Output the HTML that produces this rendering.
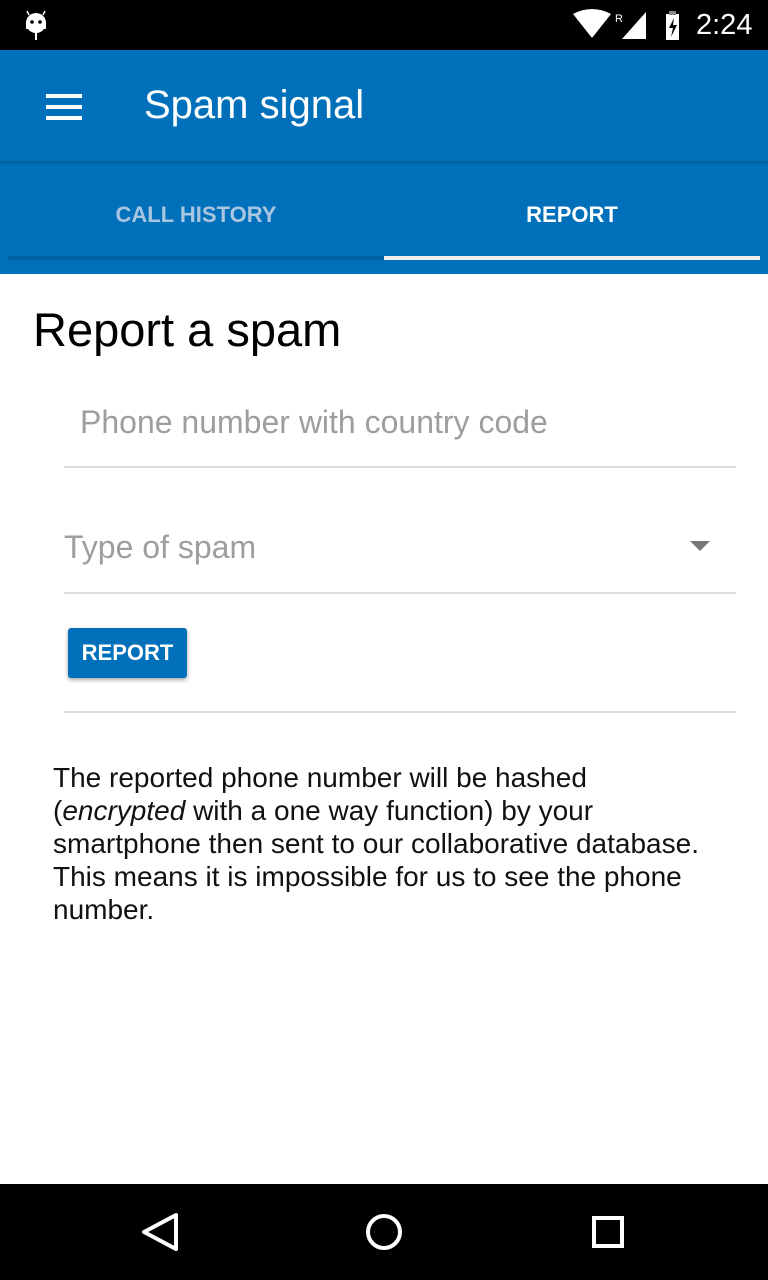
<!DOCTYPE html>
<html><head><style>
body{margin:0;width:768px;height:1280px;position:relative;background:#fff;font-family:"Liberation Sans",sans-serif;overflow:hidden}
.abs{position:absolute}
</style></head><body>
<div class="abs" style="left:0;top:0;width:768px;height:50px;background:#000"></div>
<svg class="abs" style="left:16px;top:8px" width="40" height="34" viewBox="0 0 40 34">
<ellipse cx="20" cy="15" rx="10" ry="10" fill="#fff"/><rect x="10" y="15" width="20" height="6" fill="#fff"/>
<circle cx="16" cy="14" r="1.8" fill="#000"/><circle cx="24" cy="14" r="1.8" fill="#000"/>
<rect x="19" y="22" width="2" height="10" fill="#fff"/>
<line x1="13" y1="7" x2="11" y2="3" stroke="#fff" stroke-width="1.5"/><line x1="27" y1="7" x2="29" y2="3" stroke="#fff" stroke-width="1.5"/></svg>
<svg class="abs" style="left:570px;top:8px" width="120" height="34" viewBox="0 0 120 34">
<path d="M3 6 Q22 -4 41 6 L22 30 Z" fill="#fff"/>
<text x="45" y="14" fill="#fff" font-size="11" font-family="Liberation Sans">R</text>
<path d="M52 31 L76 31 L76 4 Z" fill="#fff"/>
<rect x="96" y="6" width="13" height="26" fill="#fff"/><rect x="99" y="3" width="7" height="4" fill="#888"/>
<path d="M104 10 L99 20 L103 20 L101 29 L107 17 L103 17 Z" fill="#000"/></svg>
<div class="abs" style="left:696px;top:9px;color:#fff;font-size:29px">2:24</div>
<div class="abs" style="left:0;top:50px;width:768px;height:224px;background:#0070ba"></div>
<div class="abs" style="left:0;top:161px;width:768px;height:4px;background:linear-gradient(#005c9a,#0070ba)"></div>
<div class="abs" style="left:46px;top:94px;width:36px;height:4px;background:#fff;box-shadow:0 11px 0 #fff,0 22px 0 #fff"></div>
<div class="abs" style="left:144px;top:83px;color:#fff;font-size:40px">Spam signal</div>
<div class="abs" style="left:0;top:202px;width:392px;text-align:center;color:#a9c6e0;font-size:22px;font-weight:bold">CALL HISTORY</div>
<div class="abs" style="left:384px;top:202px;width:376px;text-align:center;color:#fff;font-size:22px;font-weight:bold">REPORT</div>
<div class="abs" style="left:8px;top:256px;width:376px;height:4px;background:#0062a6"></div>
<div class="abs" style="left:384px;top:256px;width:376px;height:4px;background:#eee"></div>
<div class="abs" style="left:33px;top:302px;font-size:47px;color:#000">Report a spam</div>
<div class="abs" style="left:80px;top:404px;font-size:32px;color:#9e9e9e">Phone number with country code</div>
<div class="abs" style="left:64px;top:466px;width:672px;height:2px;background:#ddd"></div>
<div class="abs" style="left:64px;top:529px;font-size:32px;color:#9e9e9e">Type of spam</div>
<div class="abs" style="left:690px;top:541px;width:0;height:0;border-left:10px solid transparent;border-right:10px solid transparent;border-top:10px solid #777"></div>
<div class="abs" style="left:64px;top:592px;width:672px;height:2px;background:#ddd"></div>
<div class="abs" style="left:68px;top:628px;width:119px;height:50px;background:#0070ba;border-radius:3px;box-shadow:0 2px 4px rgba(0,0,0,.35);color:#fff;font-size:22px;font-weight:bold;text-align:center;line-height:50px">REPORT</div>
<div class="abs" style="left:64px;top:711px;width:672px;height:2px;background:#ddd"></div>
<div class="abs" style="left:53px;top:761px;width:665px;font-size:28px;line-height:33px;color:#111">The reported phone number will be hashed (<i>encrypted</i> with a one way function) by your smartphone then sent to our collaborative database. This means it is impossible for us to see the phone number.</div>
<div class="abs" style="left:0;top:1184px;width:768px;height:96px;background:#000"></div>
<svg class="abs" style="left:0;top:1184px" width="768" height="96" viewBox="0 0 768 96">
<path d="M176 31 L144 48 L176 65 Z" fill="none" stroke="#fff" stroke-width="4" stroke-linejoin="round"/>
<circle cx="384" cy="48" r="16" fill="none" stroke="#fff" stroke-width="4"/>
<rect x="594" y="34" width="28" height="28" fill="none" stroke="#fff" stroke-width="4"/></svg>
</body></html>
